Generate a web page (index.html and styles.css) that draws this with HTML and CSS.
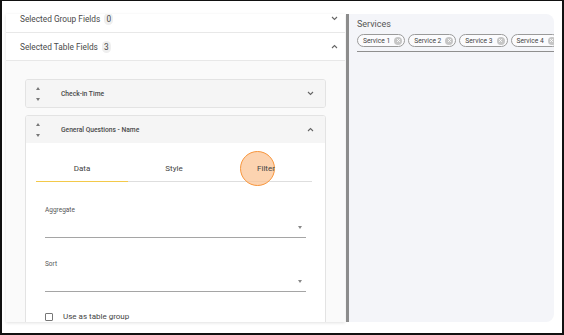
FILE: index.html
```html
<!DOCTYPE html>
<html lang="en">
<head>
  <meta charset="UTF-8">
  <meta name="viewport" content="width=device-width, initial-scale=1.0">
  <title>Report Fields</title>
  <link rel="stylesheet" href="styles.css">
</head>
<body>
  <div class="frame">
    <div class="layout">
      <section class="fields">
        <div class="fields-scroll">
          <div class="section-row">
            <span class="section-title">Selected Group Fields <span class="count">0</span></span>
            <svg class="chevron" width="7" height="5" viewBox="0 0 7 5"><path d="M1 1l2.5 2.5L6 1"/></svg>
          </div>
          <div class="section-row">
            <span class="section-title">Selected Table Fields <span class="count">3</span></span>
            <svg class="chevron" width="7" height="5" viewBox="0 0 7 5"><path d="M1 4l2.5-2.5L6 4"/></svg>
          </div>
          <div class="section-body">
            <div class="field-card">
              <div class="card-head">
                <div class="order"><span class="tri up"></span><span class="tri down"></span></div>
                <span class="card-title">Check-in Time</span>
                <svg class="chevron" width="7" height="5" viewBox="0 0 7 5"><path d="M1 1l2.5 2.5L6 1"/></svg>
              </div>
            </div>
            <div class="field-card">
              <div class="card-head">
                <div class="order"><span class="tri up"></span><span class="tri down"></span></div>
                <span class="card-title">General Questions - Name</span>
                <svg class="chevron" width="7" height="5" viewBox="0 0 7 5"><path d="M1 4l2.5-2.5L6 4"/></svg>
              </div>
              <div class="card-body">
                <div class="tabs">
                  <div class="tab active"><span class="tab-text">Data</span></div>
                  <div class="tab"><span class="tab-text">Style</span></div>
                  <div class="tab"><span class="touch"></span><span class="tab-text">Filter</span></div>
                </div>
                <div class="select-field first">
                  <div class="select-label">Aggregate</div>
                  <div class="select-box"><span class="caret"></span></div>
                </div>
                <div class="select-field">
                  <div class="select-label">Sort</div>
                  <div class="select-box"><span class="caret"></span></div>
                </div>
                <label class="check"><span class="box"></span>Use as table group</label>
              </div>
            </div>
          </div>
        </div>
      </section>
      <div class="divider"></div>
      <section class="services">
        <div class="services-label">Services</div>
        <div class="chips">
          <span class="chip">Service 1<span class="chip-x"><svg width="7" height="7" viewBox="0 0 7 7"><path d="M2.2 2.2l2.6 2.6M4.8 2.2L2.2 4.8"/></svg></span></span>
          <span class="chip">Service 2<span class="chip-x"><svg width="7" height="7" viewBox="0 0 7 7"><path d="M2.2 2.2l2.6 2.6M4.8 2.2L2.2 4.8"/></svg></span></span>
          <span class="chip">Service 3<span class="chip-x"><svg width="7" height="7" viewBox="0 0 7 7"><path d="M2.2 2.2l2.6 2.6M4.8 2.2L2.2 4.8"/></svg></span></span>
          <span class="chip">Service 4<span class="chip-x"><svg width="7" height="7" viewBox="0 0 7 7"><path d="M2.2 2.2l2.6 2.6M4.8 2.2L2.2 4.8"/></svg></span></span>
        </div>
      </section>
    </div>
  </div>
</body>
</html>
```

FILE: styles.css
```css
body {
  margin: 0;
  font-family: Roboto, "Liberation Sans", sans-serif;
  color: #444;
}

.frame {
  width: 564px;
  height: 335px;
  box-sizing: border-box;
  border: solid #111;
  border-width: 1px 2px 2px 2px;
  background: #fff;
  padding: 13px 8px 11px 4px;
}

.layout {
  display: flex;
  height: 100%;
}

/* left column */
.fields {
  width: 339px;
  flex: none;
  background: #fff;
  box-shadow: 0 1px 3px rgba(0, 0, 0, 0.12);
  overflow: hidden;
}

.fields-scroll {
  margin-top: -9px; /* list is scrolled a little */
}

.section-row {
  height: 27px;
  display: flex;
  align-items: center;
  justify-content: space-between;
  padding: 0 7px 0 14px;
  border-bottom: 1px solid #e8e8e8;
  font-size: 8.3px;
  color: #4a4a4a;
}

.count {
  display: inline-block;
  background: #efefef;
  border-radius: 5px;
  padding: 1px 2px;
  margin-left: 2px;
}

.chevron path {
  fill: none;
  stroke: #666;
  stroke-width: 1.1;
}

.section-body {
  background: #fafafa;
  padding: 18px 19px 0;
  display: flex;
  flex-direction: column;
  gap: 7px;
}

.field-card {
  border: 1px solid #e3e3e3;
  border-radius: 3px;
  background: #fff;
  overflow: hidden;
}

.card-head {
  height: 27px;
  background: #f5f5f5;
  display: flex;
  align-items: center;
  padding: 0 11px 0 9px;
}

.order {
  width: 6px;
  display: flex;
  flex-direction: column;
  align-items: center;
  gap: 8px;
  margin-right: 20px;
}

.tri {
  width: 0;
  height: 0;
  border-left: 2.5px solid transparent;
  border-right: 2.5px solid transparent;
}

.tri.up {
  border-bottom: 3px solid #777;
}

.tri.down {
  border-top: 3px solid #777;
}

.card-title {
  flex: 1;
  font-size: 6.7px;
  font-weight: 500;
  color: #4a4a4a;
}

.card-body {
  padding: 12px 19px 30px;
}

.tabs {
  display: flex;
  margin: 0 -6px 0 -9px;
  border-bottom: 1px solid #dedede;
}

.tab {
  position: relative;
  flex: 1;
  height: 26px;
  display: flex;
  align-items: center;
  justify-content: center;
  font-size: 8px;
  color: #444;
}

.tab-text {
  position: relative;
}

.tab.active::after {
  content: '';
  position: absolute;
  left: 0;
  right: 0;
  bottom: -1px;
  height: 1.5px;
  background: #f3c94a;
}

/* tap indicator from the recording */
.touch {
  position: absolute;
  left: 20px;
  top: -4px;
  width: 33px;
  height: 33px;
  border-radius: 50%;
  border: 1.5px solid #f7953c;
  background: rgba(251, 196, 150, 0.75);
}

.select-field {
  margin-top: 22px;
}

.select-field.first {
  margin-top: 24px;
}

.select-label {
  font-size: 6.5px;
  line-height: 9px;
  color: #555;
}

.select-box {
  height: 23px;
  box-sizing: border-box;
  border-bottom: 1px solid #a5a5a5;
  display: flex;
  align-items: center;
  justify-content: flex-end;
  padding: 3px 4px 0 0;
}

.caret {
  width: 0;
  height: 0;
  border-left: 2px solid transparent;
  border-right: 2px solid transparent;
  border-top: 3px solid #888;
}

.check {
  display: flex;
  align-items: center;
  gap: 10px;
  margin-top: 20px;
  font-size: 8px;
  color: #444;
}

.box {
  width: 6px;
  height: 6px;
  border: 1.5px solid #777;
  border-radius: 1px;
}

.divider {
  width: 3px;
  flex: none;
  margin-left: 1px;
  background: #8c8c8c;
}

/* right column */
.services {
  flex: 1;
  background: #f4f5f9;
  border-radius: 0 8px 8px 0;
  padding: 4px 0 0 8px;
  overflow: hidden;
}

.services-label {
  font-size: 9px;
  line-height: 12px;
  color: #555;
}

.chips {
  display: flex;
  gap: 3px;
  margin-top: 4px;
  padding-bottom: 4px;
  border-bottom: 1.5px solid #8f8f8f;
  overflow: hidden;
}

.chip {
  flex: none;
  height: 13px;
  box-sizing: border-box;
  display: flex;
  align-items: center;
  gap: 4px;
  padding: 0 2px 0 5px;
  border: 1px solid #9a9a9a;
  border-radius: 7px;
  font-size: 6.7px;
  color: #444;
  background: #fbfbfd;
}

.chip-x {
  width: 8px;
  height: 8px;
  border-radius: 50%;
  background: #c6c6c6;
  display: flex;
  align-items: center;
  justify-content: center;
}

.chip-x path {
  stroke: #fff;
  stroke-width: 1;
}
```
